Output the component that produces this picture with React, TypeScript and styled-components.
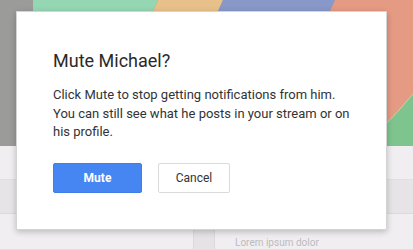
import styled, { createGlobalStyle } from 'styled-components';

const GlobalStyle = createGlobalStyle`
  html, body {
    margin: 0;
    padding: 0;
    background: #f0eef0;
  }
  body {
    font-family: Roboto, 'Liberation Sans', Arial, sans-serif;
  }
`;

const CoverArt = () => (
  <svg width='413' height='146' viewBox='0 0 413 146' style={{ display: 'block' }}>
    <rect width='413' height='146' fill='#9b9c99' />
    <polygon points='33,0 158,0 93,146 33,146' fill='#95d6b3' />
    <polygon points='158,0 223,0 158,146 93,146' fill='#e8c18a' />
    <polygon points='223,0 335,0 270,146 158,146' fill='#8898c8' />
    <polygon points='335,0 413,0 413,146 270,146' fill='#e59a83' />
    <path d='M360,146 L382,128 Q398,112 413,94 L413,146 Z' fill='#7ec48f' />
    <path d='M382,128 Q398,112 413,94' fill='none' stroke='#d9cba2' strokeWidth='1' />
  </svg>
);

const App = () => {
  return (
    <>
      <GlobalStyle />
      <Page>
        <Cover>
          <CoverArt />
        </Cover>
        <Feed>
          <Row />
          <Band />
          <Row $grow>
            <Thumb />
            <FaintText>Lorem ipsum dolor</FaintText>
          </Row>
        </Feed>

        <Dialog>
          <Title>Mute Michael?</Title>
          <Body>
            Click Mute to stop getting notifications from him.
            <br />
            You can still see what he posts in your stream or on
            <br />
            his profile.
          </Body>
          <Actions>
            <PrimaryButton>Mute</PrimaryButton>
            <SecondaryButton>Cancel</SecondaryButton>
          </Actions>
        </Dialog>
      </Page>
    </>
  );
};

const Page = styled.div`
  position: relative;
  width: 413px;
  height: 250px;
  overflow: hidden;
  display: flex;
  flex-direction: column;
  background: #f0eef0;
`;

const Cover = styled.div`
  height: 146px;
  flex-shrink: 0;
`;

const Feed = styled.div`
  flex: 1;
  display: flex;
  flex-direction: column;
`;

const Row = styled.div<{ $grow?: boolean }>`
  height: ${(p) => (p.$grow ? 'auto' : '33px')};
  flex: ${(p) => (p.$grow ? 1 : 'none')};
  display: flex;
  align-items: flex-end;
  background: #f0eef0;
  border-bottom: 1px solid #e2dfe3;
`;

const Band = styled.div`
  height: 33px;
  background: #e7e4e8;
  border-bottom: 1px solid #dcd9dd;
`;

const Thumb = styled.div`
  width: 20px;
  height: 20px;
  margin-left: 193px;
  background: #e6e3e7;
  border-right: 1px solid #dcd9dd;
  border-left: 1px solid #dcd9dd;
`;

const FaintText = styled.span`
  margin-left: 20px;
  font-size: 10px;
  line-height: 12px;
  color: #bdbabe;
`;

const Dialog = styled.div`
  position: absolute;
  left: 16px;
  top: 11px;
  width: 371px;
  height: 219px;
  box-sizing: border-box;
  padding: 37px 36px 0;
  background: #ffffff;
  border: 1px solid #d4d4d4;
  box-shadow: 0 2px 6px rgba(0, 0, 0, 0.22);
`;

const Title = styled.h1`
  margin: 0;
  font-size: 18px;
  line-height: 24px;
  font-weight: 400;
  color: #2a2a2a;
`;

const Body = styled.p`
  margin: 13px 0 0;
  font-size: 13px;
  line-height: 18.5px;
  color: #333333;
`;

const Actions = styled.div`
  display: flex;
  gap: 16px;
  margin-top: 21px;
`;

const PrimaryButton = styled.button`
  width: 89px;
  height: 30px;
  border: 1px solid #3f7ee8;
  border-radius: 2px;
  background: #4686f2;
  color: #ffffff;
  font-family: inherit;
  font-size: 12px;
  font-weight: 700;
  cursor: pointer;
`;

const SecondaryButton = styled.button`
  width: 72px;
  height: 30px;
  border: 1px solid #dadada;
  border-radius: 2px;
  background: #ffffff;
  color: #333333;
  font-family: inherit;
  font-size: 12px;
  cursor: pointer;
`;

export default App;
